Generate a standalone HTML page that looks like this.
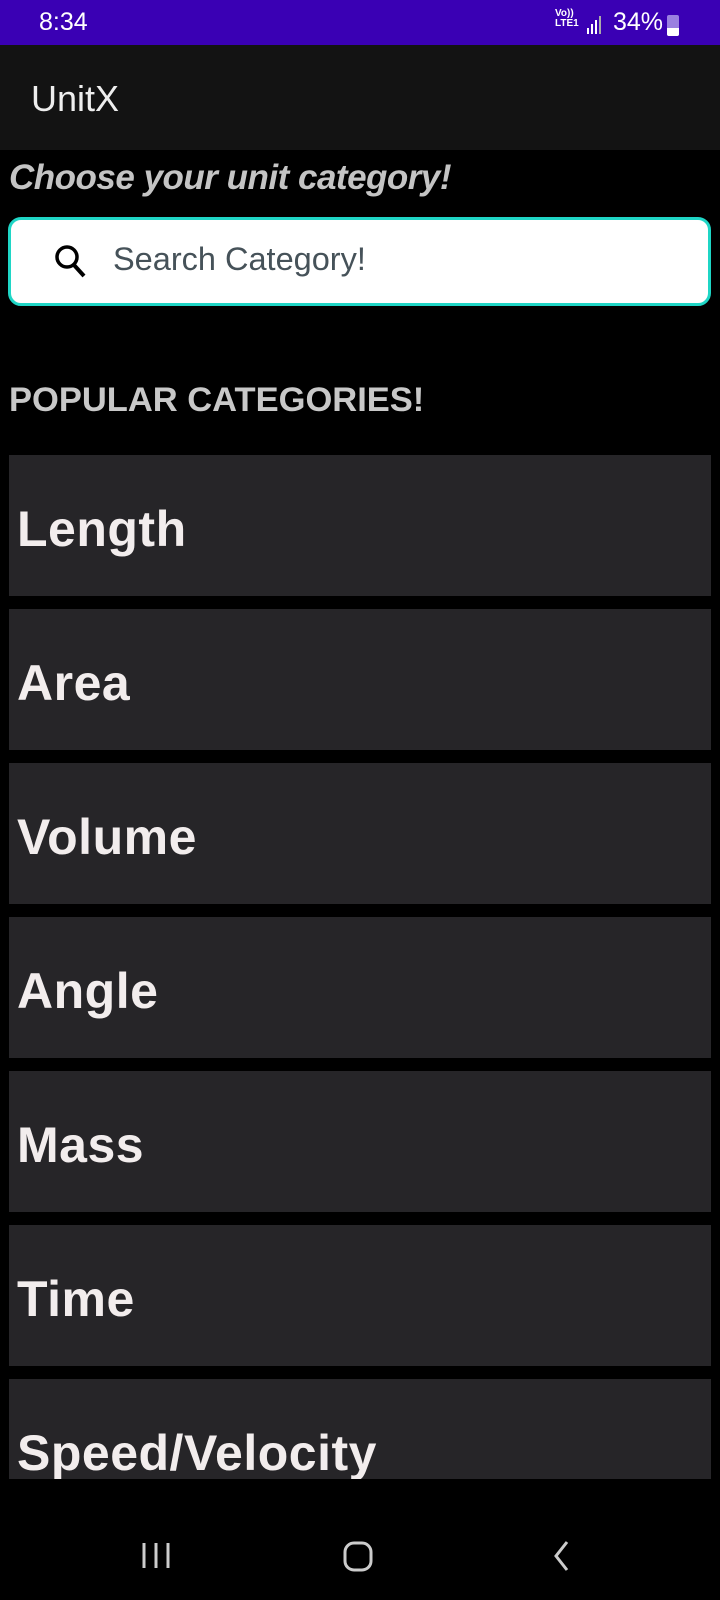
<!DOCTYPE html>
<html><head><meta charset="utf-8"><style>
*{margin:0;padding:0;box-sizing:border-box}
body{width:720px;height:1600px;background:#000;font-family:"Liberation Sans",sans-serif;position:relative;overflow:hidden}
.sb{position:absolute;top:0;left:0;width:720px;height:45px;background:#3a00b4;color:#fff}
.ab{position:absolute;top:45px;left:0;width:720px;height:105px;background:#131313}
.card{position:absolute;left:9px;width:702px;height:141px;background:#262528;overflow:hidden}
.card span{position:absolute;left:8px;top:45px;font-size:50px;font-weight:bold;color:#f2eded;letter-spacing:0.5px}
</style></head><body>
<div class="sb">
<div style="position:absolute;left:39px;top:8px;font-size:25px">8:34</div>
<div style="position:absolute;left:555px;top:9px;font-size:10px;line-height:10px;font-weight:bold">Vo))<br>LTE1</div>
<div style="position:absolute;left:587px;top:14px;width:16px;height:20px">
<div style="position:absolute;left:0;bottom:0;width:2px;height:6px;background:#fff"></div>
<div style="position:absolute;left:4px;bottom:0;width:2px;height:10px;background:#fff"></div>
<div style="position:absolute;left:8px;bottom:0;width:2px;height:14px;background:#fff"></div>
<div style="position:absolute;left:12px;bottom:0;width:2px;height:18px;background:#aaa"></div>
</div>
<div style="position:absolute;left:613px;top:8px;font-size:25px">34%</div>
<div style="position:absolute;left:667px;top:15px;width:12px;height:21px;background:#9a80e0;border-radius:2px"><div style="position:absolute;bottom:0;left:0;width:12px;height:8px;background:#fff;border-radius:0 0 2px 2px"></div></div>
</div>
<div class="ab"><div style="position:absolute;left:31px;top:33px;font-size:36px;color:#eee">UnitX</div></div>
<div style="position:absolute;left:9px;top:158px;font-size:35px;font-weight:bold;font-style:italic;color:#c4c4c4;letter-spacing:-0.5px">Choose your unit category!</div>
<div style="position:absolute;left:8px;top:217px;width:703px;height:89px;border:3px solid #1fd6c6;border-radius:13px;background:#fff">
<svg style="position:absolute;left:42px;top:22px" width="36" height="40" viewBox="0 0 36 40"><circle cx="14" cy="15" r="10" fill="none" stroke="#000" stroke-width="3.5"/><line x1="21" y1="23" x2="31" y2="34" stroke="#000" stroke-width="4"/></svg>
<div style="position:absolute;left:102px;top:21px;font-size:32.5px;color:#465259">Search Category!</div>
</div>
<div style="position:absolute;left:9px;top:381px;font-size:34.5px;font-weight:bold;color:#c8c8c8">POPULAR CATEGORIES!</div>
<div class="card" style="top:455px"><span>Length</span></div>
<div class="card" style="top:609px"><span>Area</span></div>
<div class="card" style="top:763px"><span>Volume</span></div>
<div class="card" style="top:917px"><span>Angle</span></div>
<div class="card" style="top:1071px"><span>Mass</span></div>
<div class="card" style="top:1225px"><span>Time</span></div>
<div class="card" style="top:1379px;height:100px"><span>Speed/Velocity</span></div>
<svg style="position:absolute;left:0;top:1530px" width="720" height="50">
<g stroke="#ccc" stroke-width="3" fill="none">
<line x1="144" y1="13" x2="144" y2="38"/><line x1="156" y1="13" x2="156" y2="38"/><line x1="168" y1="13" x2="168" y2="38"/>
<rect x="345" y="13" width="26" height="27" rx="9"/>
<polyline points="567,12 556,26 567,40"/>
</g></svg>
</body></html>
